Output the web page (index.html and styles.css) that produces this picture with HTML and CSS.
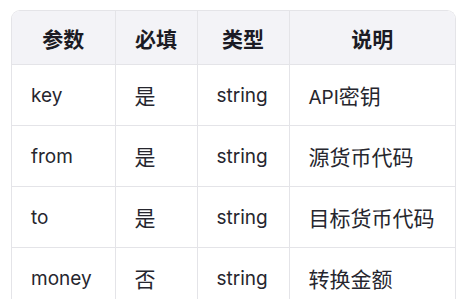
FILE: index.html
```html
<!DOCTYPE html>
<html lang="zh">
<head>
<meta charset="utf-8">
<link rel="stylesheet" href="styles.css">
</head>
<body>
<div class="wrap">
  <table class="params">
    <colgroup>
      <col class="c1"><col class="c2"><col class="c3"><col class="c4">
    </colgroup>
    <thead>
      <tr><th>参数</th><th>必填</th><th>类型</th><th>说明</th></tr>
    </thead>
    <tbody>
      <tr><td>key</td><td class="zh">是</td><td>string</td><td>API<span class="zh">密钥</span></td></tr>
      <tr><td>from</td><td class="zh">是</td><td>string</td><td class="zh">源货币代码</td></tr>
      <tr><td>to</td><td class="zh">是</td><td>string</td><td class="zh">目标货币代码</td></tr>
      <tr><td>money</td><td class="zh">否</td><td>string</td><td class="zh">转换金额</td></tr>
    </tbody>
  </table>
</div>
</body>
</html>
```
FILE: styles.css
```css
html, body {
  margin: 0;
  padding: 0;
  background: #ffffff;
}
body {
  padding: 10px 0 0 11px;
  font-family: Inter, "Noto Sans CJK SC", sans-serif;
  color: #222;
}
.wrap {
  width: 443px;
  border: 1px solid #e4e4e8;
  border-bottom: none;
  border-radius: 9px 9px 0 0;
  overflow: hidden;
}
.params {
  width: 100%;
  border-collapse: collapse;
  table-layout: fixed;
}
.c1 { width: 103px; }
.c2 { width: 82px; }
.c3 { width: 92px; }
.c4 { width: auto; }
.params th {
  height: 53px;
  background: #f3f3f7;
  font-weight: 700;
  font-size: 21px;
  color: #1b1b24;
  text-align: center;
  padding: 0;
  border-left: 1px solid #e4e4e8;
}
.params td {
  height: 60px;
  padding: 0 0 0 19px;
  font-size: 19px;
  color: #26262e;
  border-left: 1px solid #e4e4e8;
  border-top: 1px solid #e4e4e8;
}
.params .zh {
  font-size: 21px;
}
.params th:first-child,
.params td:first-child {
  border-left: none;
}
```
